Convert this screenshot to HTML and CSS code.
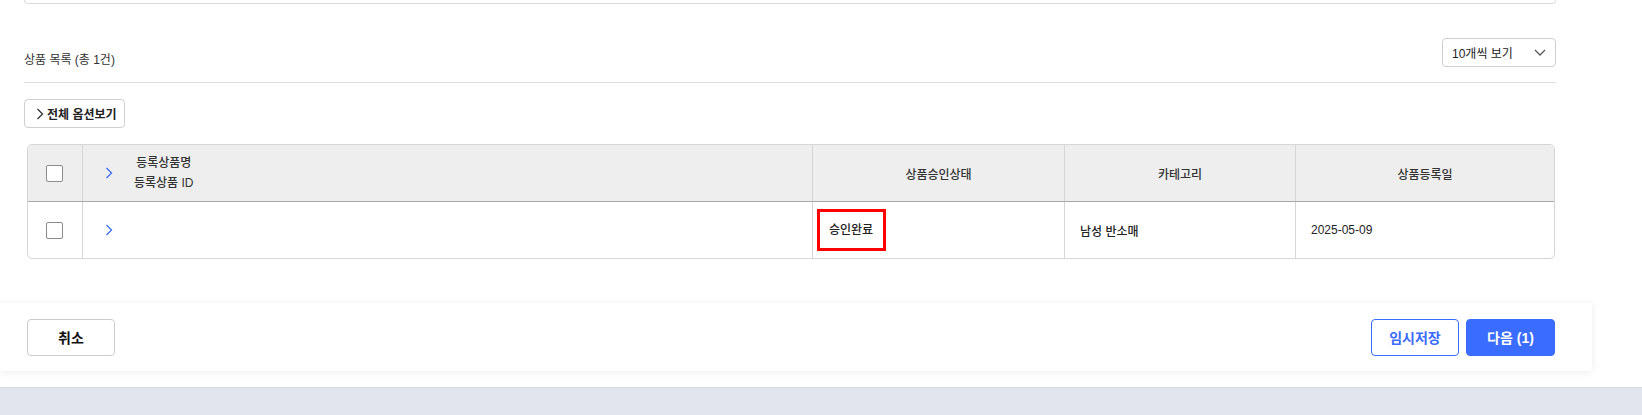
FILE: index.html
```html
<!DOCTYPE html>
<html lang="ko">
<head>
<meta charset="utf-8">
<title>상품 목록</title>
<link rel="stylesheet" href="styles.css">
</head>
<body>
<div class="page">
  <div class="content">
    <div class="top-card"></div>
    <div class="list-head">
      <div class="list-title">상품 목록 (총 1건)</div>
      <div class="select">
        <span>10개씩 보기</span>
        <svg class="select-arrow" width="12" height="7" viewBox="0 0 12 7"><polyline points="1,1 6,6 11,1" fill="none" stroke="#555" stroke-width="1.3"/></svg>
      </div>
    </div>
    <div class="opt-row">
      <button class="opt-btn">
        <svg width="8" height="12" viewBox="0 0 8 12"><polyline points="1.5,1 6.5,6 1.5,11" fill="none" stroke="#333" stroke-width="1.3"/></svg>
        <span>전체 옵션보기</span>
      </button>
    </div>
    <div class="table">
      <div class="row head">
        <div class="cell c-check"><span class="checkbox"></span></div>
        <div class="cell c-name">
          <svg class="chev" width="8" height="12" viewBox="0 0 8 12"><polyline points="1.5,1 6.5,6 1.5,11" fill="none" stroke="#3b6cf6" stroke-width="1.3"/></svg>
          <div class="name-lines"><div>등록상품명</div><div>등록상품 ID</div></div>
        </div>
        <div class="cell c-status center">상품승인상태</div>
        <div class="cell c-cat center">카테고리</div>
        <div class="cell c-date center">상품등록일</div>
      </div>
      <div class="row body-row">
        <div class="cell c-check"><span class="checkbox"></span></div>
        <div class="cell c-name">
          <svg class="chev" width="8" height="12" viewBox="0 0 8 12"><polyline points="1.5,1 6.5,6 1.5,11" fill="none" stroke="#3b6cf6" stroke-width="1.3"/></svg>
        </div>
        <div class="cell c-status status-cell"><span class="mark">승인완료</span></div>
        <div class="cell c-cat text">남성 반소매</div>
        <div class="cell c-date text">2025-05-09</div>
      </div>
    </div>
  </div>
  <div class="footer">
    <button class="btn btn-cancel">취소</button>
    <div class="footer-right">
      <button class="btn btn-outline">임시저장</button>
      <button class="btn btn-primary">다음 (1)</button>
    </div>
  </div>
</div>
</body>
</html>
```
FILE: styles.css
```css
* { box-sizing: border-box; }
html, body { margin: 0; padding: 0; }
body {
  background: #e2e4ee;
  font-family: "Liberation Sans", "Noto Sans CJK KR", sans-serif;
  color: #222;
}
.page {
  background: #fff;
  height: 388px;
  border-bottom: 1px solid #d8dae4;
}
.content {
  padding: 0 86px 0 24px;
}
.top-card {
  height: 4px;
  border: 1px solid #dcdcdc;
  border-top: none;
  border-radius: 0 0 6px 6px;
}
.list-head {
  margin-top: 33px;
  display: flex;
  justify-content: space-between;
  align-items: center;
  padding-bottom: 15px;
  border-bottom: 1px solid #dcdcdc;
}
.list-title {
  font-size: 12px;
  color: #333;
  padding-top: 13px;
}
.select {
  width: 114px;
  height: 29px;
  border: 1px solid #cfcfcf;
  border-radius: 4px;
  display: flex;
  align-items: center;
  justify-content: space-between;
  padding: 0 9px 0 9px;
  font-size: 12px;
  color: #222;
}
.opt-row {
  margin-top: 16px;
  display: flex;
}
.opt-btn {
  height: 29px;
  border: 1px solid #cfcfcf;
  border-radius: 4px;
  background: #fff;
  display: flex;
  align-items: center;
  gap: 3px;
  padding: 0 7px 0 11px;
  white-space: nowrap;
  font-family: inherit;
  font-size: 12px;
  font-weight: 600;
  color: #222;
}
.table {
  margin: 16px 0 0 3px;
  width: 1528px;
  border: 1px solid #d6d6d6;
  border-radius: 5px;
  overflow: hidden;
}
.row { display: flex; }
.row.head {
  background: #eeeeee;
  height: 57px;
  border-bottom: 1px solid #a8a8a8;
}
.row.body-row { height: 56px; }
.cell {
  display: flex;
  align-items: center;
  border-left: 1px solid #d6d6d6;
  font-size: 12px;
}
.cell:first-child { border-left: none; }
.c-check { width: 54px; justify-content: center; }
.c-name { width: 730px; padding-left: 22px; }
.c-status { width: 252px; }
.c-cat { width: 231px; }
.c-date { flex: 1; }
.center { justify-content: center; color: #333; font-weight: 500; }
.text { padding-left: 15px; color: #222; font-weight: 500; }
.checkbox {
  width: 17px;
  height: 17px;
  border: 1px solid #8c8c8c;
  border-radius: 2px;
  background: #fff;
  margin-right: 1px;
}
.chev { flex: none; }
.name-lines {
  margin-left: 21px;
  font-size: 12px;
  line-height: 20px;
  color: #333;
  font-weight: 500;
  text-align: center;
}
.status-cell { padding-left: 4px; }
.mark {
  display: inline-block;
  border: 3px solid #ff0000;
  padding: 9px 10px 9px 9px;
  font-size: 12px;
  line-height: 18px;
  color: #222;
  font-weight: 500;
}
.footer {
  margin-top: 44px;
  width: 1592px;
  height: 68px;
  background: #fff;
  box-shadow: 0 1px 8px rgba(0, 0, 0, 0.08);
  display: flex;
  justify-content: space-between;
  align-items: center;
  padding: 0 37px 0 27px;
}
.footer-right { display: flex; gap: 7px; }
.btn {
  height: 37px;
  border-radius: 4px;
  font-family: inherit;
  font-size: 14px;
  font-weight: 700;
}
.btn-cancel {
  width: 88px;
  background: #fff;
  border: 1px solid #cccccc;
  color: #111;
}
.btn-outline {
  width: 88px;
  background: #fff;
  border: 1px solid #3a6cff;
  color: #3a6cff;
}
.btn-primary {
  width: 89px;
  background: #3a6cff;
  border: 1px solid #3a6cff;
  color: #fff;
}
```
